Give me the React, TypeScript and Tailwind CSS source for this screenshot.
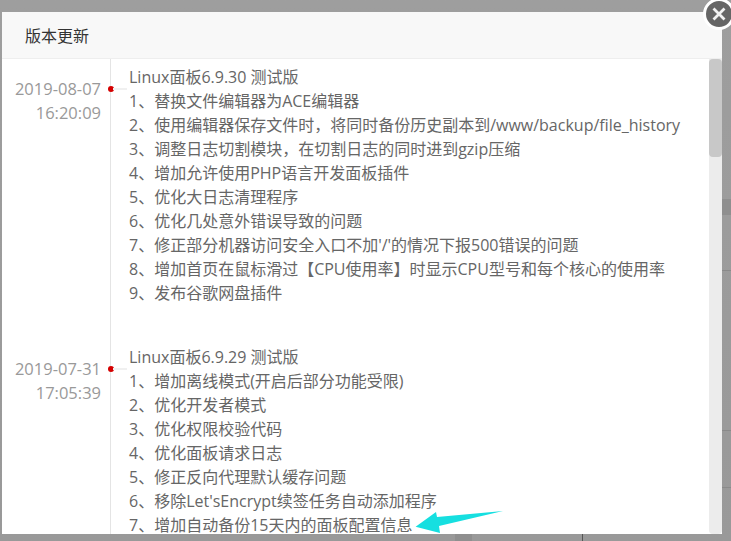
const font = "font-['Open_Sans','Noto_Sans_CJK_SC',sans-serif]";

const logs = [
  {
    date: "2019-08-07",
    time: "16:20:09",
    title: "Linux面板6.9.30 测试版",
    items: [
      "1、替换文件编辑器为ACE编辑器",
      "2、使用编辑器保存文件时，将同时备份历史副本到/www/backup/file_history",
      "3、调整日志切割模块，在切割日志的同时进到gzip压缩",
      "4、增加允许使用PHP语言开发面板插件",
      "5、优化大日志清理程序",
      "6、优化几处意外错误导致的问题",
      "7、修正部分机器访问安全入口不加'/'的情况下报500错误的问题",
      "8、增加首页在鼠标滑过【CPU使用率】时显示CPU型号和每个核心的使用率",
      "9、发布谷歌网盘插件",
    ],
  },
  {
    date: "2019-07-31",
    time: "17:05:39",
    title: "Linux面板6.9.29 测试版",
    items: [
      "1、增加离线模式(开启后部分功能受限)",
      "2、优化开发者模式",
      "3、优化权限校验代码",
      "4、优化面板请求日志",
      "5、修正反向代理默认缓存问题",
      "6、移除Let'sEncrypt续签任务自动添加程序",
      "7、增加自动备份15天内的面板配置信息",
    ],
  },
];

export default function App() {
  return (
    <div className={`${font} relative flex h-[541px] w-[731px] overflow-hidden bg-gradient-to-b from-[#9e9e9e] to-[#999999] pt-3 pl-[2px]`}>
      <div className="flex w-[720px] shrink-0 flex-col">
        <div className="flex h-[522px] shrink-0 flex-col bg-white">
          <div className="flex h-[47px] shrink-0 items-center border-b border-[#eeeeee] bg-[#f8f8f8] pt-[2px] pl-[23px] text-[16px] text-[#333333]">
            版本更新
          </div>
          <div className="flex min-h-0 flex-1 overflow-hidden">
            <div className="min-w-0 flex-1 overflow-hidden">
              {logs.map((log) => (
                <div key={log.date} className="flex">
                  <div className="relative w-[109px] shrink-0 border-r border-[#e4e4e4] pt-[18px] pr-[9px] text-right text-[16.5px] leading-[24px] text-[#999999]">
                    <div>{log.date}</div>
                    <div>{log.time}</div>
                    <span className="absolute top-[27px] right-[-4px] h-[6px] w-[6px] rounded-full bg-[#d40000]" />
                    <span className="absolute top-[29px] right-[-17px] h-[2px] w-[14px] bg-[#f0f0f0]" />
                  </div>
                  <div className="pt-[6px] pb-[34px] pl-[18px] text-[16px] leading-[24px] whitespace-nowrap text-[#666666]">
                    <div>{log.title}</div>
                    {log.items.map((item) => (
                      <div key={item}>{item}</div>
                    ))}
                  </div>
                </div>
              ))}
            </div>
            <div className="w-[13px] shrink-0 rounded-b-[4px] bg-[#ececec]">
              <div className="h-[98px] rounded-[4px] bg-[#c8c8c8]" />
            </div>
          </div>
        </div>
        {/* page behind the overlay, only this sliver shows */}
        <div className="flex flex-1 pl-[453px]">
          <div className="w-[17px] bg-[#8f8f8f]" />
          <div className="ml-[110px] w-px bg-[#555555]" />
        </div>
      </div>
      <div className="flex flex-1 flex-col pt-[187px]">
        <div className="h-[16px] bg-[#8f8f8f]" />
        <div className="mt-[55px] h-px bg-[#8a8a8a]" />
        <div className="mt-[159px] h-px bg-[#8a8a8a]" />
        <div className="mt-[56px] h-px bg-[#8a8a8a]" />
      </div>
      <button className="absolute top-[-2px] right-[-4px] flex h-[32px] w-[32px] items-center justify-center rounded-full border-[3px] border-white bg-[#666666]">
        <svg width="16" height="16" viewBox="0 0 16 16" fill="none" stroke="#f2f2f2" strokeWidth="2.8">
          <path d="M2.5 2.5l11 11M13.5 2.5l-11 11" />
        </svg>
      </button>
      <svg className="absolute top-[508px] left-[414px]" width="92" height="28" viewBox="0 0 92 28">
        <path d="M1.6 18.7L22 4L23 9L89 3L25 18L26 25Z" fill="#16dfe0" />
      </svg>
    </div>
  );
}
